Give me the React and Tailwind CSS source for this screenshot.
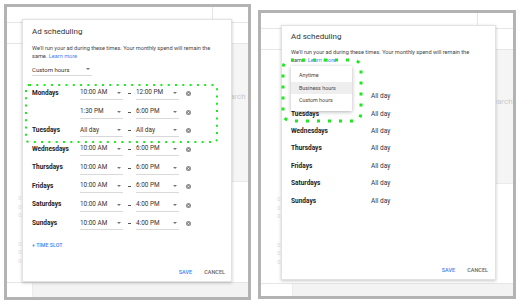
import React from 'react';

const leftRows = [
  ['Mondays', '10:00 AM', '12:00 PM'],
  ['', '1:30 PM', '6:00 PM'],
  ['Tuesdays', 'All day', 'All day'],
  ['Wednesdays', '10:00 AM', '6:00 PM'],
  ['Thursdays', '10:00 AM', '6:00 PM'],
  ['Fridays', '10:00 AM', '6:00 PM'],
  ['Saturdays', '10:00 AM', '4:00 PM'],
  ['Sundays', '10:00 AM', '4:00 PM'],
];

const rightRows = ['Mondays', 'Tuesdays', 'Wednesdays', 'Thursdays', 'Fridays', 'Saturdays', 'Sundays'];

function Caret() {
  return (
    <svg width="4" height="2" viewBox="0 0 4 2" className="shrink-0">
      <path d="M0 0 L4 0 L2 2 Z" fill="#757575" />
    </svg>
  );
}

function ClearIcon() {
  return (
    <svg width="5" height="5" viewBox="0 0 10 10" className="shrink-0">
      <circle cx="5" cy="5" r="5" fill="#8a8a8a" />
      <path d="M3.2 3.2 L6.8 6.8 M6.8 3.2 L3.2 6.8" stroke="#fff" strokeWidth="1.3" />
    </svg>
  );
}

function TimeField({ value }) {
  return (
    <div className="flex w-[43px] h-[13px] items-center justify-between pr-[2px] border-b border-[#d9d9d9] text-[6.4px] text-[#333]">
      <span>{value}</span>
      <Caret />
    </div>
  );
}

function Description({ leading }) {
  return (
    <div className="text-[5.6px] text-[#444] whitespace-nowrap" style={{ lineHeight: leading }}>
      <div>We'll run your ad during these times. Your monthly spend will remain the</div>
      <div className="flex gap-[1.5px]">
        <span>same.</span>
        <span className="text-[#4285f4]">Learn more</span>
      </div>
    </div>
  );
}

function Background({ topW, leftW, grayH, stripH, zerosTop, zerosLeft, searchLeft, searchTop }) {
  return (
    <div className="flex flex-col h-full">
      <div className="flex h-[16px] border-b border-[#e6e6e6]">
        <div className="h-full border-r border-[#e6e6e6]" style={{ width: topW }} />
      </div>
      <div className="flex h-[21px] border-b border-[#e6e6e6]">
        <div className="h-full border-r border-[#e6e6e6]" style={{ width: topW }} />
      </div>
      <div className="flex flex-1">
        <div className="flex flex-col shrink-0 text-[6px] leading-[8.5px] text-[#dedede]" style={{ width: leftW, paddingTop: zerosTop, paddingLeft: zerosLeft }}>
          <span>0</span>
          <span>0</span>
          <span>0</span>
          <span className="mt-[20px]">0</span>
          <span>0</span>
          <span>0</span>
        </div>
        <div className="flex flex-col flex-1">
          <div className="bg-[#f5f5f5] border-b border-[#ebebeb] text-[8px] leading-[10px] text-[#c9c9c9]" style={{ height: grayH, paddingLeft: searchLeft, paddingTop: searchTop }}>
            Search
          </div>
          <div className="flex-1" />
        </div>
      </div>
      <div className="flex border-t border-[#e6e6e6]" style={{ height: stripH }}>
        <div className="h-full bg-white border-r border-[#ececec]" style={{ width: leftW }} />
        <div className="flex-1 h-full bg-[#f3f3f3]" />
      </div>
    </div>
  );
}

function Buttons({ pr }) {
  return (
    <div className="flex justify-end items-center gap-[12px] text-[5.5px] font-medium leading-[8px]" style={{ paddingRight: pr }}>
      <span className="text-[#4285f4]">SAVE</span>
      <span className="text-[#666]">CANCEL</span>
    </div>
  );
}

function LeftDialog() {
  return (
    <div className="absolute left-[15px] top-[12px] w-[210px] h-[263px] bg-white border border-[#e2e2e2] shadow-[0_1px_3px_rgba(0,0,0,0.22)] pl-[9px] pt-[7px]">
      <div className="text-[8px] leading-[10px] text-[#333]">Ad scheduling</div>
      <div className="mt-[6.7px]">
        <Description leading="8px" />
      </div>
      <div className="mt-[3.8px] flex w-[60px] h-[13px] items-center justify-between pr-[2px] border-b border-[#d9d9d9] text-[6px] text-[#333]">
        <span>Custom hours</span>
        <Caret />
      </div>
      <div className="mt-[8px] flex flex-col">
        {leftRows.map((r, i) => (
          <div key={i} className="flex items-center h-[18.6px]">
            <div className="w-[48px] text-[6.5px] font-bold text-[#222]">{r[0]}</div>
            <TimeField value={r[1]} />
            <div className="w-[13px] flex justify-center">
              <div className="w-[3px] h-[1px] bg-[#555]" />
            </div>
            <TimeField value={r[2]} />
            <div className="ml-[7px] flex items-center">
              <ClearIcon />
            </div>
          </div>
        ))}
      </div>
      <div className="mt-[7.5px] text-[5.3px] leading-[8px] font-medium text-[#4285f4]">+ TIME SLOT</div>
      <div className="mt-[19px]">
        <Buttons pr={6} />
      </div>
    </div>
  );
}

function RightDialog() {
  return (
    <div className="absolute left-[20px] top-[12px] w-[215px] h-[255px] bg-white border border-[#e2e2e2] shadow-[0_1px_3px_rgba(0,0,0,0.22)] pl-[9px] pt-[6px]">
      <div className="text-[8px] leading-[10px] text-[#333]">Ad scheduling</div>
      <div className="mt-[7px]">
        <Description leading="7.7px" />
      </div>
      <div className="mt-[24px] flex flex-col">
        {rightRows.map((d, i) => (
          <div key={d} className="flex items-center h-[17.4px]">
            <div className={`w-[80px] text-[6.5px] font-bold text-[#222] ${i === 0 ? 'invisible' : ''}`}>{d}</div>
            <div className="text-[6.5px] text-[#333]">All day</div>
          </div>
        ))}
      </div>
      <div className="absolute left-[9px] top-[240px] right-0">
        <Buttons pr={7} />
      </div>
      <div className="absolute left-[9px] top-[40px] w-[61px] h-[45px] bg-white shadow-[0_1px_4px_rgba(0,0,0,0.3)] pt-[3px] flex flex-col text-[5.4px] text-[#444]">
        <div className="h-[12.5px] flex items-center pl-[8px]">Anytime</div>
        <div className="h-[12.5px] flex items-center pl-[8px] bg-[#eeeeee]">Business hours</div>
        <div className="h-[12.5px] flex items-center pl-[8px]">Custom hours</div>
      </div>
    </div>
  );
}

export default function App() {
  return (
    <div className="relative w-[522px] h-[305px] bg-white overflow-hidden font-['Roboto',sans-serif]">
      <div className="flex items-start pl-[4px] pt-[4px]">
        <div className="relative w-[247px] h-[296px] border-[3px] border-[#b3b3b3] bg-white">
          <Background topW={206} leftW={26} grayH={138} stripH={15} zerosTop={150} zerosLeft={11} searchLeft={188} searchTop={48} />
          <LeftDialog />
        </div>
        <div className="relative ml-[7px] mt-[6px] w-[258px] h-[289px] border-[3px] border-[#b3b3b3] bg-white">
          <Background topW={217} leftW={32} grayH={134} stripH={13} zerosTop={145} zerosLeft={16} searchLeft={195} searchTop={47} />
          <RightDialog />
        </div>
      </div>
      <svg className="absolute left-0 top-0 pointer-events-none" width="522" height="305">
        <rect x="26" y="85" width="191" height="57" rx="3" fill="none" stroke="#1ee81e" strokeWidth="2" strokeDasharray="2 5.3" />
        <rect x="283" y="60" width="78" height="61" rx="8" fill="none" stroke="#1ee81e" strokeWidth="3" strokeDasharray="3 8" />
      </svg>
    </div>
  );
}
